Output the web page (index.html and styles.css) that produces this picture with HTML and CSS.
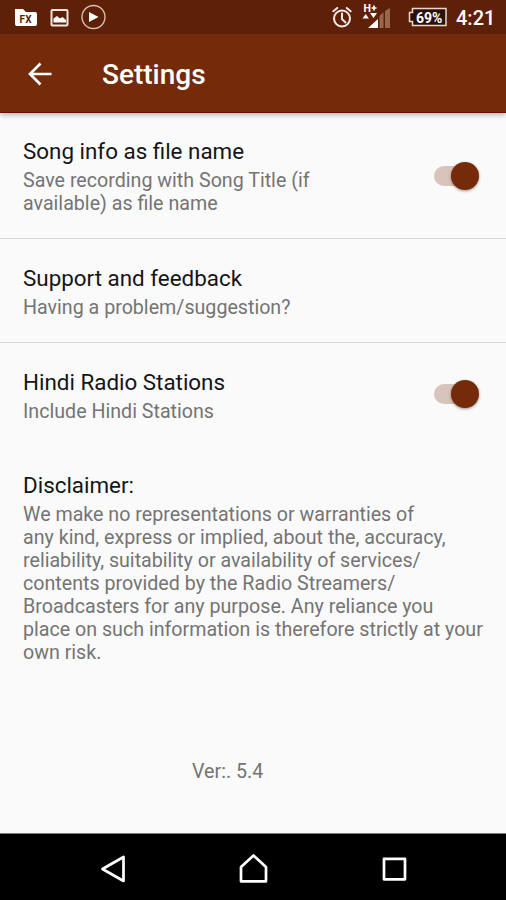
FILE: index.html
```html
<!DOCTYPE html>
<html lang="en">
<head>
<meta charset="utf-8">
<title>Settings</title>
<link rel="stylesheet" href="styles.css">
</head>
<body>
<header class="status">
  <svg class="status-left" width="120" height="34" viewBox="0 0 120 34">
    <path d="M15 9h8l3 3h9q2 0 2 2v10q0 2-2 2H17q-2 0-2-2z" fill="#fff"/>
    <text x="19.5" y="22.5" class="folder-label" textLength="12">FX</text>
    <rect x="51.5" y="10" width="16" height="15.5" rx="1" fill="none" stroke="#f3e6e0" stroke-width="2"/>
    <path d="M53.500 22.500v-4l3.500-2.500 3 2.500 2.500-1.500 3.500 3v2.500z" fill="#fff"/>
    <circle cx="93.500" cy="17" r="11.500" fill="none" stroke="#d8bfb3" stroke-width="1.400"/>
    <path d="M89 12l9.500 5-9.500 5z" fill="#fff"/>
  </svg>
  <div class="status-right">
    <svg width="132" height="34" viewBox="320 0 132 34">
      <g fill="none" stroke="#f7ece7" stroke-width="2" stroke-linecap="round">
        <circle cx="342" cy="18.500" r="8"/>
        <path d="M342 13.500v5.500l3.500 3.500M333.300 11.300l4-3.300M350.700 11.300l-4-3.300"/>
      </g>
      <text x="363.500" y="12" class="net">H</text>
      <path d="M371.500 8h5M374 5.500v5" stroke="#fff" stroke-width="1.700"/>
      <path d="M362.500 18.500l3.200-4.500 3.200 4.500zM370 13h7l-3.500 5z" fill="#fff"/>
      <path d="M368 28l10-9v9z" fill="#fff"/>
      <path d="M379.500 28V16l4-4v16zM385 28V11l5-3v20z" fill="#97664d"/>
      <path d="M412.500 8.500H446v17H412.500v-4h-3v-9h3z" fill="#301006" stroke="#ead8d0" stroke-width="1.500"/>
      <text x="416" y="22.500" class="battery" textLength="26.500" lengthAdjust="spacingAndGlyphs">69%</text>
    </svg>
    <span class="clock">4:21</span>
  </div>
</header>
<div class="appbar">
  <svg width="26" height="26" viewBox="0 0 26 26"><path d="M24.500 13H3.500M13.500 2.500L3 13l10.500 10.500" fill="none" stroke="#fff" stroke-width="2.700"/></svg>
  <h1>Settings</h1>
</div>
<main>
  <section class="row first">
    <div class="copy"><h2>Song info as file name</h2><p>Save recording with Song Title (if<br>available) as file name</p></div>
    <span class="switch"><i></i></span>
  </section>
  <section class="row short">
    <div class="copy"><h2>Support and feedback</h2><p>Having a problem/suggestion?</p></div>
  </section>
  <section class="row short plain">
    <div class="copy"><h2>Hindi Radio Stations</h2><p>Include Hindi Stations</p></div>
    <span class="switch"><i></i></span>
  </section>
  <section class="row plain">
    <div class="copy"><h2>Disclaimer:</h2><p>We make no representations or warranties of<br>any kind, express or implied, about the, accuracy,<br>reliability, suitability or availability of services/<br>contents provided by the Radio Streamers/<br>Broadcasters for any purpose. Any reliance you<br>place on such information is therefore strictly at your<br>own risk.</p></div>
  </section>
  <p class="version">Ver:. 5.4</p>
</main>
<nav class="navbar">
  <svg width="506" height="66" viewBox="0 834 506 66" fill="none" stroke="#fff" stroke-width="2.700" stroke-linejoin="round">
    <path d="M102.500 869L123.500 857v24z"/>
    <path d="M241 881.300V867l12.500-11.500L266 867v14.300z"/>
    <rect x="384" y="858.800" width="21" height="20.500"/>
  </svg>
</nav>
</body>
</html>
```

FILE: styles.css
```css
* { box-sizing: border-box; }
body {
  margin: 0;
  height: 900px;
  display: flex;
  flex-direction: column;
  overflow: hidden;
  background: #fafafa;
  font-family: Roboto, "Liberation Sans", sans-serif;
}
h1, h2, p { margin: 0; white-space: nowrap; }
svg { display: block; flex: none; }
.status {
  height: 34px;
  flex: none;
  display: flex;
  justify-content: space-between;
  background: #5f2008;
}
.status-right { display: flex; }
.folder-label { font-size: 10px; font-weight: 700; fill: #5f2008; }
.net { font-size: 10.5px; font-weight: 700; fill: #fff; }
.battery { font-size: 15px; font-weight: 700; fill: #fff; }
.clock {
  width: 54px;
  padding-left: 4px;
  color: #fff;
  font-size: 20px;
  font-weight: 500;
  line-height: 36px;
}
.appbar {
  height: 79px;
  flex: none;
  display: flex;
  align-items: center;
  gap: 49px;
  padding: 0 27px;
  background: #752b0a;
  border-bottom: 1px solid #641306;
  box-shadow: 0 2px 5px rgba(0, 0, 0, .28);
  z-index: 1;
}
.appbar svg { margin-top: 1px; }
.appbar h1 {
  padding-top: 3px;
  color: #fff;
  font-size: 28px;
  font-weight: 500;
  line-height: 32px;
}
main { flex: 1; min-height: 0; }
.row {
  min-height: 104px;
  display: flex;
  justify-content: space-between;
  padding: 26px 27px 23px 23px;
  border-bottom: 1px solid #d9d9d9;
}
.first { min-height: 126px; }
.short { padding-top: 27px; }
.plain { border-bottom-color: transparent; }
h2 { padding-bottom: 1px; color: #151515; font-size: 22.400px; font-weight: 400; line-height: 25px; }
.copy p { padding-top: 4px; color: #747474; font-size: 19.650px; line-height: 23px; }
.switch {
  position: relative;
  width: 45px;
  height: 28px;
  margin-bottom: 3px;
  align-self: center;
  display: flex;
  align-items: center;
  justify-content: flex-end;
}
.short .switch { margin-bottom: 6px; }
.switch::before {
  content: "";
  position: absolute;
  left: 0;
  width: 38px;
  height: 20px;
  border-radius: 10px;
  background: #d9c4bc;
}
.switch i {
  position: relative;
  width: 28px;
  height: 28px;
  border-radius: 50%;
  background: #752b0a;
  box-shadow: 0 1px 3px rgba(0, 0, 0, .4);
}
.version { padding: 72px 0 0 192px; color: #747474; font-size: 19.650px; line-height: 23px; }
.navbar { height: 67px; flex: none; background: #000; border-top: 1px solid #777; }
```
